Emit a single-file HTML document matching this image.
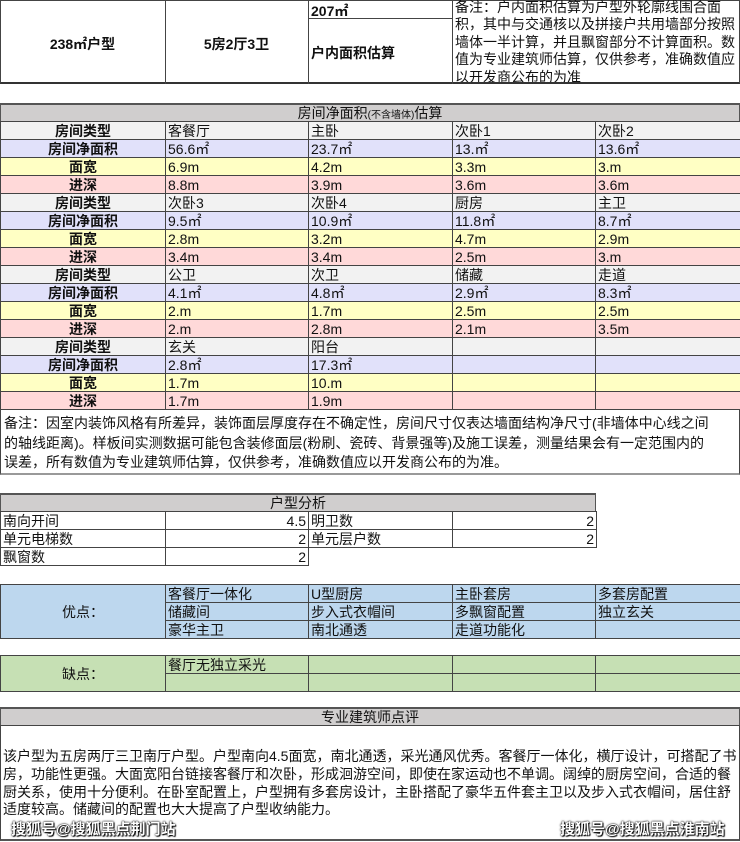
<!DOCTYPE html>
<html><head><meta charset="utf-8"><style>
*{margin:0;padding:0;box-sizing:border-box}
body{width:740px;height:842px;background:#fff;position:relative;overflow:hidden;font-family:"Liberation Sans","Noto Sans CJK SC",sans-serif;font-size:14px;color:#111}
.a{position:absolute}
table{position:absolute;border-collapse:collapse;table-layout:fixed}
td{border:1px solid #444;padding:0 2px;height:18px;line-height:16px;white-space:nowrap;overflow:hidden;font-size:14px}
td.h{text-align:center;font-weight:bold}
.g td{background:#f2f2f2}.p td{background:#e1e1fa}.y td{background:#ffffc4}.r td{background:#ffd9d9}
.hd{background:#d0cece;text-align:center;border:1px solid #555;border-width:2px 1px 1px 1px;font-size:14px}
.nw{white-space:nowrap}
.wm{position:absolute;top:818px;white-space:nowrap;font-size:15px;font-weight:bold;color:#fff;text-shadow:0 0 2px #000,0 0 1px #000,1px 1px 1px #000}
</style></head><body>
<div class="a" style="left:0;top:0;width:740px;height:84px;border:1px solid #444;border-bottom:2px solid #333"></div>
<div class="a" style="left:165px;top:0;width:1px;height:84px;background:#444"></div>
<div class="a" style="left:308px;top:0;width:1px;height:84px;background:#444"></div>
<div class="a" style="left:452px;top:0;width:1px;height:84px;background:#444"></div>
<div class="a" style="left:308px;top:18px;width:144px;height:1px;background:#444"></div>
<div class="a" style="left:0;top:34px;width:165px;text-align:center;font-weight:bold;font-size:14px">238㎡户型</div>
<div class="a" style="left:165px;top:34px;width:143px;text-align:center;font-weight:bold;font-size:14px">5房2厅3卫</div>
<div class="a" style="left:311px;top:1px;font-weight:bold;font-size:14px">207㎡</div>
<div class="a" style="left:311px;top:43px;font-weight:bold;font-size:14px">户内面积估算</div>
<div class="a nw" style="left:455px;top:-1px;width:283px;height:83px;overflow:hidden;font-size:14px;line-height:17.4px">备注：户内面积估算为户型外轮廓线围合面<br>积，其中与交通核以及拼接户共用墙部分按照<br>墙体一半计算，并且飘窗部分不计算面积。数<br>值为专业建筑师估算，仅供参考，准确数值应<br>以开发商公布的为准</div>
<div class="a hd" style="left:0;top:103px;width:740px;height:19px;line-height:16px">房间净面积<span style="font-size:10px">(不含墙体)</span>估算</div>
<table style="left:0;top:121px;width:740px">
<colgroup><col style="width:165px"><col style="width:143px"><col style="width:144px"><col style="width:143px"><col style="width:145px"></colgroup>
<tr class="g"><td class="h">房间类型</td><td>客餐厅</td><td>主卧</td><td>次卧1</td><td>次卧2</td></tr>
<tr class="p"><td class="h">房间净面积</td><td>56.6㎡</td><td>23.7㎡</td><td>13.㎡</td><td>13.6㎡</td></tr>
<tr class="y"><td class="h">面宽</td><td>6.9m</td><td>4.2m</td><td>3.3m</td><td>3.m</td></tr>
<tr class="r"><td class="h">进深</td><td>8.8m</td><td>3.9m</td><td>3.6m</td><td>3.6m</td></tr>
<tr class="g"><td class="h">房间类型</td><td>次卧3</td><td>次卧4</td><td>厨房</td><td>主卫</td></tr>
<tr class="p"><td class="h">房间净面积</td><td>9.5㎡</td><td>10.9㎡</td><td>11.8㎡</td><td>8.7㎡</td></tr>
<tr class="y"><td class="h">面宽</td><td>2.8m</td><td>3.2m</td><td>4.7m</td><td>2.9m</td></tr>
<tr class="r"><td class="h">进深</td><td>3.4m</td><td>3.4m</td><td>2.5m</td><td>3.m</td></tr>
<tr class="g"><td class="h">房间类型</td><td>公卫</td><td>次卫</td><td>储藏</td><td>走道</td></tr>
<tr class="p"><td class="h">房间净面积</td><td>4.1㎡</td><td>4.8㎡</td><td>2.9㎡</td><td>8.3㎡</td></tr>
<tr class="y"><td class="h">面宽</td><td>2.m</td><td>1.7m</td><td>2.5m</td><td>2.5m</td></tr>
<tr class="r"><td class="h">进深</td><td>2.m</td><td>2.8m</td><td>2.1m</td><td>3.5m</td></tr>
<tr class="g"><td class="h">房间类型</td><td>玄关</td><td>阳台</td><td></td><td></td></tr>
<tr class="p"><td class="h">房间净面积</td><td>2.8㎡</td><td>17.3㎡</td><td></td><td></td></tr>
<tr class="y"><td class="h">面宽</td><td>1.7m</td><td>10.m</td><td></td><td></td></tr>
<tr class="r"><td class="h">进深</td><td>1.7m</td><td>1.9m</td><td></td><td></td></tr>
</table>
<div class="a nw" style="left:0;top:409px;width:740px;height:66px;border:1px solid #444;border-bottom:2px solid #999;padding:4px 3px;line-height:19.5px;font-size:14px;overflow:hidden">备注：因室内装饰风格有所差异，装饰面层厚度存在不确定性，房间尺寸仅表达墙面结构净尺寸(非墙体中心线之间<br>的轴线距离)。样板间实测数据可能包含装修面层(粉刷、瓷砖、背景强等)及施工误差，测量结果会有一定范围内的<br>误差，所有数值为专业建筑师估算，仅供参考，准确数值应以开发商公布的为准。</div>
<div class="a hd" style="left:0;top:493px;width:596px;height:19px;line-height:16px">户型分析</div>
<table style="left:0;top:511px;width:596px">
<colgroup><col style="width:165px"><col style="width:143px"><col style="width:144px"><col style="width:144px"></colgroup>
<tr><td>南向开间</td><td style="text-align:right">4.5</td><td>明卫数</td><td style="text-align:right">2</td></tr>
<tr><td>单元电梯数</td><td style="text-align:right">2</td><td>单元层户数</td><td style="text-align:right">2</td></tr>
<tr><td>飘窗数</td><td style="text-align:right">2</td><td style="border:none"></td><td style="border:none"></td></tr>
</table>
<table style="left:0;top:584px;width:740px">
<colgroup><col style="width:165px"><col style="width:143px"><col style="width:144px"><col style="width:143px"><col style="width:145px"></colgroup>
<tr style="background:#bdd7ee"><td rowspan="3" style="text-align:center">优点：</td><td>客餐厅一体化</td><td>U型厨房</td><td>主卧套房</td><td>多套房配置</td></tr>
<tr style="background:#bdd7ee"><td>储藏间</td><td>步入式衣帽间</td><td>多飘窗配置</td><td>独立玄关</td></tr>
<tr style="background:#bdd7ee"><td>豪华主卫</td><td>南北通透</td><td>走道功能化</td><td></td></tr>
</table>
<table style="left:0;top:655px;width:740px">
<colgroup><col style="width:165px"><col style="width:143px"><col style="width:144px"><col style="width:143px"><col style="width:145px"></colgroup>
<tr style="background:#c6e0b4"><td rowspan="2" style="text-align:center">缺点：</td><td>餐厅无独立采光</td><td></td><td></td><td></td></tr>
<tr style="background:#c6e0b4"><td></td><td></td><td></td><td></td></tr>
</table>
<div class="a hd" style="left:0;top:707px;width:740px;height:19px;line-height:16px">专业建筑师点评</div>
<div class="a" style="left:0;top:725px;width:740px;height:116px;border:1px solid #444;border-bottom:2px solid #555"></div>
<div class="a nw" style="left:3px;top:748px;width:735px;line-height:17.8px;font-size:14px">该户型为五房两厅三卫南厅户型。户型南向4.5面宽，南北通透，采光通风优秀。客餐厅一体化，横厅设计，可搭配了书<br>房，功能性更强。大面宽阳台链接客餐厅和次卧，形成洄游空间，即使在家运动也不单调。阔绰的厨房空间，合适的餐<br>厨关系，使用十分便利。在卧室配置上，户型拥有多套房设计，主卧搭配了豪华五件套主卫以及步入式衣帽间，居住舒<br>适度较高。储藏间的配置也大大提高了户型收纳能力。</div>
<div class="wm" style="left:11px">搜狐号@搜狐黑点荆门站</div>
<div class="wm" style="left:560px">搜狐号@搜狐黑点淮南站</div>
</body></html>
